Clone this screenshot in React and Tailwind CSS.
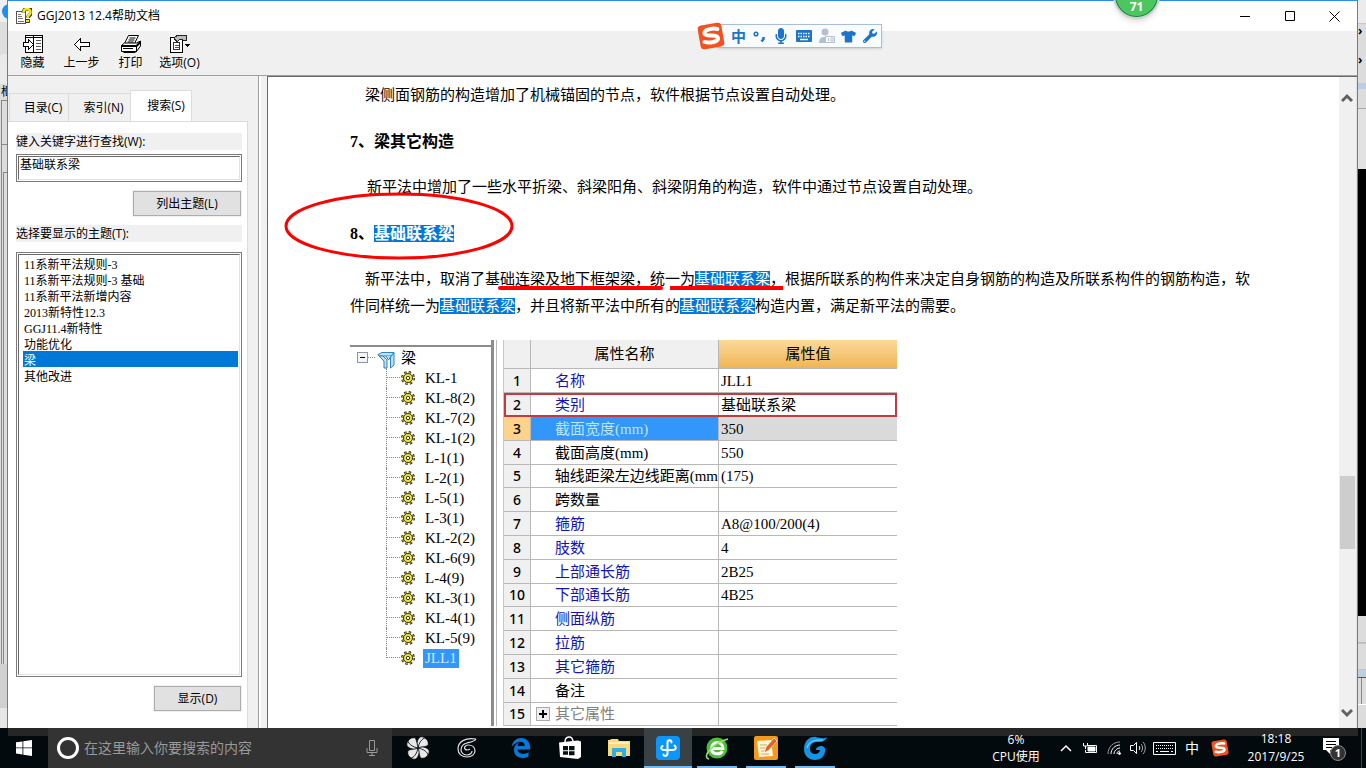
import { FaMicrophone, FaTshirt, FaWrench } from 'react-icons/fa'

const UI_FONT = "font-['Open_Sans','Noto_Sans_CJK_SC',sans-serif]"
const SONG_FONT = "font-['Liberation_Serif','Noto_Sans_CJK_SC',serif]"

const TOPICS = [
  '11系新平法规则-3',
  '11系新平法规则-3 基础',
  '11系新平法新增内容',
  '2013新特性12.3',
  'GGJ11.4新特性',
  '功能优化',
  '梁',
  '其他改进',
]

const BEAMS = [
  'KL-1', 'KL-8(2)', 'KL-7(2)', 'KL-1(2)', 'L-1(1)', 'L-2(1)', 'L-5(1)', 'L-3(1)',
  'KL-2(2)', 'KL-6(9)', 'L-4(9)', 'KL-3(1)', 'KL-4(1)', 'KL-5(9)', 'JLL1',
]

const PROPERTIES = [
  { name: '名称', value: 'JLL1', tone: 'blue' },
  { name: '类别', value: '基础联系梁', tone: 'blue', boxed: true },
  { name: '截面宽度(mm)', value: '350', selected: true },
  { name: '截面高度(mm)', value: '550' },
  { name: '轴线距梁左边线距离(mm', value: '(175)' },
  { name: '跨数量', value: '' },
  { name: '箍筋', value: 'A8@100/200(4)', tone: 'blue' },
  { name: '肢数', value: '4', tone: 'blue' },
  { name: '上部通长筋', value: '2B25', tone: 'blue' },
  { name: '下部通长筋', value: '4B25', tone: 'blue' },
  { name: '侧面纵筋', value: '', tone: 'blue' },
  { name: '拉筋', value: '', tone: 'blue' },
  { name: '其它箍筋', value: '', tone: 'blue' },
  { name: '备注', value: '' },
  { name: '其它属性', value: '', tone: 'gray', expandable: true },
]

/* ---------- icons ---------- */

function HelpDocIcon() {
  return (
    <svg width="16" height="16" viewBox="0 0 16 16">
      <path d="M.5 3.500h9v12h-9z" fill="#fff" stroke="#555" shapeRendering="crispEdges" />
      <path d="M2 6h3M2 8h4M2 10h5M2 13h6" stroke="#777" shapeRendering="crispEdges" />
      <path d="M7.500 4.500c0-5 8-5 8-.5 0 3-3.500 3-3.500 6" fill="none" stroke="#333" strokeWidth="4" />
      <path d="M7.500 4.500c0-4.500 7-4.500 7-.5 0 3-3 3-3 6" fill="none" stroke="#fce803" strokeWidth="2.500" />
      <path d="M9.500 11.500h4v3h-4z" fill="#fce803" stroke="#333" />
    </svg>
  )
}

function HideIcon() {
  return (
    <svg width="22" height="20" viewBox="0 0 22 20" shapeRendering="crispEdges" fill="none" stroke="#000">
      <path d="M3.500 1.500h17v17h-17z" fill="#fff" />
      <path d="M11.500 1.500v17M3 3.500h18" />
      <path d="M14 6.500h5M14 9.500h5M14 12.500h5M14 15.500h5" stroke="#555" />
      <path d="M1.500 8.500h5v-3l5 5-5 5v-3h-5z" fill="#fff" />
    </svg>
  )
}

function BackIcon() {
  return (
    <svg width="18" height="20" viewBox="0 0 18 20" shapeRendering="crispEdges">
      <path d="M1.500 10.500l6-6v4h9v4h-9v4z" fill="#fff" stroke="#000" />
    </svg>
  )
}

function PrintIcon() {
  return (
    <svg width="22" height="20" viewBox="0 0 22 20" stroke="#000" fill="#fff">
      <path d="M8.500 1.500h10l-4 8H4.500z" />
      <path d="M9.500 4h6M8.500 6h6M7.500 8h6" strokeWidth="1" />
      <path d="M1.500 11.500l3-2.500h12l4-2v5l-4 5.500h-15z" />
      <path d="M1.500 12h15l4-4" strokeWidth="2" fill="none" />
      <path d="M16.500 12v6M3 14.500h10M3.500 18.500h12" fill="none" />
    </svg>
  )
}

function OptionsIcon() {
  return (
    <svg width="22" height="20" viewBox="0 0 22 20" shapeRendering="crispEdges">
      <path d="M1.500 3.500h12v15h-12z" fill="#fff" stroke="#000" />
      <path d="M4.500 8.500h6v7h-6z" fill="#fff" stroke="#333" />
      <path d="M6 11h4M6 13h4" stroke="#555" />
      <path d="M5 4l4-3h8v5h-3l-3-1-3 3z" fill="#bbb" stroke="#222" />
      <path d="M16 10h5l-2.500 3z" />
    </svg>
  )
}

function SogouIcon({ className }) {
  return (
    <svg className={className} viewBox="0 0 28 28">
      <g transform="rotate(-10 14 14)">
        <rect x="2" y="2" width="24" height="24" rx="4" fill="#f4511e" />
        <path
          d="M21.500 8.200C17 6.200 8 6.400 8 10.300c0 4.500 12.500 2 12.500 6.600 0 4.200-9 4.200-14 1.800"
          fill="none"
          stroke="#fff"
          strokeWidth="4"
          strokeLinecap="round"
        />
      </g>
    </svg>
  )
}

function KeyboardIcon() {
  return (
    <svg width="16" height="12" viewBox="0 0 16 12">
      <rect width="16" height="12" rx="1" fill="#1b74c9" />
      <path d="M2 3.500h12M2 6.500h12" stroke="#fff" strokeWidth="1.500" strokeDasharray="1.500 1" />
      <path d="M4 9.500h8" stroke="#fff" strokeWidth="1.500" />
    </svg>
  )
}

function UserBadgeIcon() {
  return (
    <svg width="16" height="16" viewBox="0 0 16 16" fill="#b4bfd0">
      <circle cx="6" cy="4" r="3.500" />
      <path d="M0 15c0-4 2-6 5-6h4v6z" />
      <path d="M6.500 8.500h9v6h-9z" fill="#fff" stroke="#b4bfd0" />
      <path d="M9.500 10v3M12 10h2v3h-2z" stroke="#b4bfd0" fill="none" />
    </svg>
  )
}

function GearIcon() {
  return (
    <svg width="14" height="14" viewBox="0 0 14 14">
      <circle cx="7" cy="7" r="5.500" fill="none" stroke="#3c3a10" strokeWidth="3" strokeDasharray="2.300 2.020" />
      <circle cx="7" cy="7" r="4.500" fill="#efe53c" stroke="#3c3a10" strokeWidth="1" />
      <circle cx="7" cy="7" r="5.500" fill="none" stroke="#efe53c" strokeWidth="1" strokeDasharray="1.300 3.020" strokeDashoffset="-.5" />
      <circle cx="7" cy="7" r="1.700" fill="#fff" stroke="#3c3a10" />
    </svg>
  )
}

function BeamIcon() {
  return (
    <svg width="18" height="18" viewBox="0 0 18 18" fill="#bfe3fb" stroke="#2b83c6">
      <path d="M1 3.500l4-2h12l-3 3.500H2z" />
      <path d="M2 5l5 5v7h3V9L6 5zM13.500 6L17 2v12l-3.500 3z" />
      <path d="M9 5l2.500 4L14 5" />
    </svg>
  )
}

function WindowsIcon() {
  return (
    <svg width="16" height="16" viewBox="0 0 16 16" fill="#fff">
      <path d="M0 2.300l6.500-.9v6.100H0zM7.300 1.300L16 0v7.500H7.300zM0 8.300h6.500v6.200L0 13.600zM7.300 8.300H16V16l-8.700-1.300z" />
    </svg>
  )
}

function MicOutlineIcon() {
  return (
    <svg width="12" height="18" viewBox="0 0 12 18" fill="none" stroke="#999">
      <path d="M3.500 1.500h5v10h-5zM1 9v4.500h10V9M6 13.500v3M3 16.500h6" />
    </svg>
  )
}

function FanIcon() {
  return (
    <svg width="24" height="24" viewBox="0 0 24 24" fill="#e8e8e8" stroke="#020a0d" strokeWidth=".8">
      {[0, 90, 180, 270].map((deg) => (
        <g key={deg} transform={`rotate(${deg} 12 12)`}>
          <path d="M12 12C12 7 14 4 17 1.500c4 1 6 4 5 8C18 11 15 11.500 12 12z" />
          <path d="M12 12C10 8 11 4 14 1c2-.4 4 0 4.500.8C14.500 4 13 7.500 12 12z" />
        </g>
      ))}
    </svg>
  )
}

function SpiralIcon() {
  return (
    <svg width="22" height="22" viewBox="0 0 22 22" fill="none" stroke="#e2e2e2" strokeWidth="1.200">
      <path d="M20 2C9 0 2 5 2 12c0 5 4 8 9 8 5 0 8-3 8-6 0-4-3-6-7-6-3 0-4 3-3 4 2 2 5 0 5 0" />
      <path d="M20 2c-2 3-6 3-9 4-4 1-6 4-6 7s3 5 6 5c3 0 5-2 5-4" />
    </svg>
  )
}

function EdgeIcon() {
  return (
    <svg width="24" height="24" viewBox="0 0 24 24" fill="#0a78d8">
      <path d="M2.740 10.810C3.830-1.360 22.500-1.360 21.200 13.560H8.610c0 4.290 5.810 5.650 10.930 2.750v4.220C13.250 23.880 5 21.430 5 14.090c0-5.510 4.970-7.280 4.970-7.280S8.580 8.580 8.540 10.050h7.160c0-7.120-9.800-4.480-12.960.76z" />
    </svg>
  )
}

function StoreIcon() {
  return (
    <svg width="22" height="24" viewBox="0 0 22 24">
      <path d="M0 6.500l19-2 3 1V21l-3 2-18-2z" fill="#fff" />
      <path d="M6 6c0-6 7-7 8-1" fill="none" stroke="#fff" strokeWidth="1.500" />
      <path d="M4 10h5v4.200H4zM10 10h5.500v4.200H10zM4 15.200h5v3.600H4zM10 15.200h5.500v4H10z" fill="#061014" />
    </svg>
  )
}

function FolderIcon() {
  return (
    <svg width="22" height="20" viewBox="0 0 22 20">
      <path d="M0 2h2l1-1h7l1 2h11v15H0z" fill="#f9d978" />
      <path d="M1 4h20v2H1z" fill="#fdeeb5" />
      <path d="M4 10h14v9h-4v-5H8v5H4z" fill="#31aee8" />
    </svg>
  )
}

function BeamAppIcon() {
  return (
    <svg width="24" height="24" viewBox="0 0 24 24">
      <rect width="24" height="24" rx="4" fill="#0c96f7" />
      <path
        d="M15.500 6.500c0-3-4-3-4 0v11c0 3-4 3-4 1M6.500 10c-3 3 0 4 2 4h8c4 0 4-3 2-4.500"
        fill="none"
        stroke="#fff"
        strokeWidth="2"
        strokeLinecap="round"
      />
    </svg>
  )
}

function GreenBrowserIcon() {
  return (
    <svg width="24" height="24" viewBox="0 0 24 24">
      <circle cx="12" cy="12" r="10.500" fill="#4fbd38" />
      <path d="M6.500 12.500h11.500c0-8-11.500-8-11.500 0 0 6.500 9 6.500 11 2.500" fill="none" stroke="#fff" strokeWidth="3" />
      <path d="M4 23c-8-2 4-16 19-20" fill="none" stroke="#8be36b" strokeWidth="1.500" />
    </svg>
  )
}

function NoteIcon() {
  return (
    <svg width="24" height="24" viewBox="0 0 24 24">
      <rect width="24" height="24" rx="2" fill="#f39a1d" />
      <path d="M3 5l14-1 2 16-14 1z" fill="#fff6de" />
      <path d="M6 9h7M6 12h6M7 15h4M7 18h8" stroke="#d8a55a" />
      <path d="M10 17l2-6 8-9 3 3-8 9z" fill="#e8611a" stroke="#fff" strokeWidth=".7" />
    </svg>
  )
}

function BlueSwirlIcon() {
  return (
    <svg width="24" height="24" viewBox="0 0 24 24">
      <path
        d="M24 1c-2 5-6 5-10 5-5 0-7 3-7 7s3 5 5 5c3 0 5-2 5-4h-4c0-3 3-4 6-4 3 1 4 3 3 6-1 5-5 8-10 8-6 0-11-4-11-11C1 5 7 0 13 1c4 1 8 2 11 0z"
        fill="#1593e6"
      />
      <path d="M20 4c-9 0-14 1-16 8" fill="none" stroke="#5ec6ff" strokeWidth="1.500" />
    </svg>
  )
}

function WifiIcon() {
  return (
    <svg width="14" height="14" viewBox="0 0 14 14" fill="none" stroke="#fff">
      <path d="M1 13C1 6 6 1 13 1" stroke="#999" />
      <path d="M4 13c0-5 4-9 9-9M7 13c0-3 3-6 6-6M10 13c0-2 1-3 3-3" />
      <circle cx="12.500" cy="12.500" r="1" fill="#fff" />
    </svg>
  )
}

/* ---------- desktop edges ---------- */

function LeftEdge() {
  return (
    <div className="flex w-[7px] shrink-0 flex-col overflow-hidden bg-[#dcdcdc]">
      <div className="h-[22px] bg-[#efefef] pl-[2px] pt-1">
        <div className="h-[15px] w-4 rounded-full bg-[#1f8fe8]" />
      </div>
      <div className="h-[32px] bg-[#dedede]" />
      <div className="h-[30px] rounded-tl bg-[#eaeaea]" />
      <div className={`${UI_FONT} h-4 pl-px text-[12px] leading-4`}>框</div>
      <div className="ml-px h-[45px] border border-r-0 border-[#888]" />
      <div className="ml-px flex-1 border-l border-[#888] pl-px pt-[27px]">
        <div className="h-full border-l border-t border-[#888]" />
      </div>
      <div className="h-[44px] bg-[#d0d0d0]" />
      <div className="h-5 bg-[#e6e6e6]" />
    </div>
  )
}

function RightEdge() {
  return (
    <div className="flex w-2 shrink-0 flex-col overflow-hidden bg-[#dcdcdc] text-[12px] leading-none">
      <div className="h-[23px] bg-[#ececec]" />
      <div className="flex h-[60px] flex-col justify-between border-t border-[#c8c8c8] py-px font-bold">
        <span>›</span>
        <span className="pb-4">›</span>
      </div>
      <div className="h-[6px] bg-[#b9cde4]" />
      <div className="h-5 border-b border-[#aaa]" />
      <div className="h-[60px] bg-[#e2e2e2]" />
      <div className="flex-1 bg-black" />
      <div className="h-[27px] border-b border-[#bbb]" />
      <div className="h-[27px] border-y border-[#c4c4c4]" />
      <div className="h-2 border-b border-[#555] bg-[#c0cfe0]" />
      <div className="h-[26px] w-1 border-r border-[#888]" />
      <div className="h-6 border-t border-white" />
    </div>
  )
}

/* ---------- help window ---------- */

function TitleBar() {
  return (
    <header className="flex h-[30px] shrink-0 items-center bg-white pl-2">
      <HelpDocIcon />
      <h1 className="ml-[5px] text-[12px] leading-4">GGJ2013 12.4帮助文档</h1>
      <div className="ml-auto flex h-full">
        <button aria-label="最小化" className="flex w-[45px] items-center justify-center">
          <svg width="10" height="10" stroke="#000"><path d="M0 5.500h10" /></svg>
        </button>
        <button aria-label="最大化" className="flex w-[45px] items-center justify-center">
          <svg width="10" height="10" stroke="#000" fill="none"><path d="M.5.500h9v9h-9z" /></svg>
        </button>
        <button aria-label="关闭" className="flex w-[45px] items-center justify-center">
          <svg width="11" height="11" stroke="#000"><path d="M.5.500l10 10M10.500.500l-10 10" /></svg>
        </button>
      </div>
    </header>
  )
}

function Toolbar() {
  const items = [
    { label: '隐藏', icon: HideIcon },
    { label: '上一步', icon: BackIcon },
    { label: '打印', icon: PrintIcon },
    { label: '选项(O)', icon: OptionsIcon },
  ]
  return (
    <div className="flex h-[44px] shrink-0 bg-[#f0f0f0] pt-[3px]">
      {items.map(({ label, icon: Icon }) => (
        <button key={label} className="flex w-[49px] flex-col items-center gap-px whitespace-nowrap text-[12px] leading-4">
          <Icon />
          {label}
        </button>
      ))}
    </div>
  )
}

function PushButton({ className, children }) {
  return (
    <button className={`${className} mr-px h-[25px] self-end border border-[#adadad] bg-[#e1e1e1] text-[12px] leading-4 outline outline-[#f0f0f0]`}>
      {children}
    </button>
  )
}

function SearchPanel() {
  return (
    <aside className="flex w-[251px] shrink-0 flex-col border-r border-[#a0a0a0] bg-[#f0f0f0] pt-[14px]">
      <div role="tablist" className="flex h-[31px] items-end pl-px text-[12px] leading-4">
        <button role="tab" className="h-7 w-[60px] border border-b-0 border-[#dcdcdc] pl-2">目录(C)</button>
        <button role="tab" className="h-7 w-[61px] border-t border-[#dcdcdc] pl-2">索引(N)</button>
        <button role="tab" aria-selected="true" className="h-[31px] w-[62px] border border-b-0 border-[#dcdcdc] bg-white pl-[10px]">
          搜索(S)
        </button>
      </div>
      <div className="mr-[10px] flex min-h-0 flex-1 flex-col border-r border-t border-[#dcdcdc] bg-white pb-[17px] pl-2 pr-[5px] pt-[11px]">
        <label htmlFor="keyword" className="h-[17px] bg-[#f0f0f0] text-[12px] leading-[17px]">键入关键字进行查找(W):</label>
        <div className="mt-1 border border-[#7a7a7a] p-px">
          <input
            id="keyword"
            defaultValue="基础联系梁"
            className={`${SONG_FONT} block h-[24px] w-full border border-b-[#e3e3e3] border-l-[#696969] border-r-[#e3e3e3] border-t-[#696969] px-px pb-2 text-[12px] leading-4`}
          />
        </div>
        <PushButton className="mt-[9px] w-[108px]">列出主题(L)</PushButton>
        <label htmlFor="topics" className="mt-[9px] h-[17px] bg-[#f0f0f0] text-[12px] leading-[17px]">选择要显示的主题(T):</label>
        <div className="mt-[10px] min-h-0 flex-1 border border-[#7a7a7a] p-px">
          <select
            id="topics"
            size={8}
            defaultValue="梁"
            className={`${SONG_FONT} block h-full w-full appearance-none overflow-hidden border border-b-[#e3e3e3] border-l-[#696969] border-r-[#e3e3e3] border-t-[#696969] bg-white pl-1 pr-px text-[12px] leading-4`}
          >
            {TOPICS.map((topic) => (
              <option
                key={topic}
                value={topic}
                className="h-4 min-h-0 p-0 pl-px leading-[14px] checked:bg-[linear-gradient(#0078d7,#0078d7)] checked:[-webkit-text-fill-color:white]"
              >
                {topic}
              </option>
            ))}
          </select>
        </div>
        <PushButton className="mt-[9px] w-[87px]">显示(D)</PushButton>
      </div>
    </aside>
  )
}

function Hit() {
  return <mark className="bg-[#0078d7] text-white">基础联系梁</mark>
}

function BeamTree() {
  return (
    <div className="w-[144px] shrink-0 border-r-[3px] border-[#8c8c8c]">
      <div className="mt-[5px] border-t-2 border-[#8c8c8c] pl-[7px]">
        <div className="flex h-[21px] items-center">
          <button aria-label="折叠" className="flex h-[11px] w-[11px] items-center justify-center border border-[#8a97a8] bg-[#f4f4f4]">
            <span className="h-px w-[5px] bg-black" />
          </button>
          <span className="w-[7px] border-t border-dotted border-[#888]" />
          <span className="ml-[2px] pt-1"><BeamIcon /></span>
          <span className="ml-[6px]">梁</span>
        </div>
        <ul className="ml-[29px]">
          {BEAMS.map((beam) => (
            <li key={beam} className="group flex h-5 items-center">
              <span className="h-full w-[14px] self-start border-l border-dotted border-[#888] group-last:h-[10px]">
                <span className="block h-[10px] border-b border-dotted border-[#888]" />
              </span>
              <span className="ml-px"><GearIcon /></span>
              <span className={beam === 'JLL1' ? 'ml-2 bg-[#3296fa] px-[2px] leading-[19px] text-[#cdeaff]' : 'ml-[10px]'}>{beam}</span>
            </li>
          ))}
        </ul>
      </div>
    </div>
  )
}

function nameTone(row) {
  if (row.selected) return 'bg-[#3296fa] text-[#b9e6f8]'
  if (row.tone === 'blue') return 'text-[#1414b4]'
  if (row.tone === 'gray') return 'text-[#808080]'
  return ''
}

function PropertyTable() {
  return (
    <table className="ml-[6px] w-[394px] table-fixed border-separate border-spacing-0 border-l border-[#c8c8c8] text-left leading-[22px]">
      <colgroup>
        <col className="w-[27px]" />
        <col className="w-[188px]" />
        <col />
      </colgroup>
      <thead>
        <tr className="h-[29px] text-center">
          <th className="border-b border-r border-[#b8b8b8] bg-[#f0f0f0]" />
          <th className="border-b border-r border-[#b8b8b8] bg-[#f0f0f0] font-normal">属性名称</th>
          <th className="border-b border-[#b8b8b8] bg-linear-to-b from-[#fbd998] to-[#efb553] font-normal">属性值</th>
        </tr>
      </thead>
      <tbody>
        {PROPERTIES.map((row, i) => (
          <tr
            key={row.name}
            className={`h-6 [&:nth-child(5n)]:h-[23px] ${row.boxed ? 'relative outline-2 -outline-offset-2 outline-[#c03c40]' : ''}`}
          >
            <td
              className={`border-b border-r border-[#b8b8b8] p-0 text-center font-['Noto_Sans',sans-serif] text-[14px] font-medium ${
                row.selected ? 'bg-[#fdd28a]' : 'bg-[#f0f0f0]'
              }`}
            >
              {i + 1}
            </td>
            <td className={`overflow-hidden whitespace-nowrap border-b border-r border-[#b8b8b8] p-0 ${nameTone(row)}`}>
              <div className="flex items-center">
                <span className="flex w-6 justify-center">
                  {row.expandable && (
                    <button aria-label="展开" className="flex h-[14px] w-[14px] items-center justify-center border border-[#aaa] bg-[#eee]">
                      <svg width="8" height="8" stroke="#000" strokeWidth="2"><path d="M0 4h8M4 0v8" /></svg>
                    </button>
                  )}
                </span>
                {row.name}
              </div>
            </td>
            <td className={`border-b border-[#b8b8b8] p-0 pl-[2px] ${row.selected ? 'bg-[#dadada]' : ''}`}>{row.value}</td>
          </tr>
        ))}
      </tbody>
    </table>
  )
}

// hand-drawn red ellipse and underlines over the text
function Annotations() {
  return (
    <svg className="pointer-events-none absolute left-0 top-0" width="560" height="240" fill="none" stroke="#f00" aria-hidden="true">
      <ellipse cx="131" cy="149" rx="113" ry="32" strokeWidth="3" />
      <path d="M232 211h161" strokeWidth="4" strokeLinecap="round" />
      <path d="M402 211h113" strokeWidth="4" />
    </svg>
  )
}

function ScrollBar() {
  return (
    <div className="flex w-[18px] shrink-0 flex-col border-r border-[#e3e3e3] bg-[#f0f0f0] pb-[10px] pr-px pt-[16px]">
      <svg className="self-center" width="12" height="10" fill="none" stroke="#606060" strokeWidth="3"><path d="M1 8l5-5 5 5" /></svg>
      <div className="flex min-h-0 flex-1 flex-col">
        <div className="grow-[373]" />
        <div className="ml-px h-[73px] shrink-0 bg-[#cdcdcd]" />
        <div className="grow-[159]" />
      </div>
      <svg className="self-center" width="12" height="10" fill="none" stroke="#606060" strokeWidth="3"><path d="M1 2l5 5 5-5" /></svg>
    </div>
  )
}

function Document() {
  return (
    <main className="flex min-w-0 flex-1 border-l border-t border-[#696969] bg-white">
      <article className={`${SONG_FONT} relative min-w-0 flex-1 overflow-hidden pl-[82px] pr-[86px] pt-[5px] text-[15px] leading-[27px]`}>
        <div className="flex flex-col gap-[19px]">
          <p className="indent-[15px]">梁侧面钢筋的构造增加了机械锚固的节点，软件根据节点设置自动处理。</p>
          <h2 className="text-[16px] font-bold">7、梁其它构造</h2>
          <p className="indent-[17px]">新平法中增加了一些水平折梁、斜梁阳角、斜梁阴角的构造，软件中通过节点设置自动处理。</p>
          <h2 className="text-[16px] font-bold">8、<Hit /></h2>
          <p className="indent-[15px]">
            新平法中，取消了基础连梁及地下框架梁，统一为<Hit />，根据所联系的构件来决定自身钢筋的构造及所联系构件的钢筋构造，软件同样统一为<Hit />，并且将新平法中所有的<Hit />构造内置，满足新平法的需要。
          </p>
        </div>
        <div className="mt-5 flex items-stretch leading-5">
          <BeamTree />
          <div className="ml-[2px] w-px bg-[#b8b8b8]" />
          <PropertyTable />
        </div>
        <Annotations />
      </article>
      <ScrollBar />
    </main>
  )
}

function ImeBar() {
  return (
    <div className="absolute left-[697px] top-[21px] flex h-[30px] items-center">
      <SogouIcon className="relative z-10 h-7 w-7" />
      <div className="-ml-2 flex h-6 w-[165px] items-center justify-between border border-[#a9bdd3] bg-[#f9fcff] pl-[13px] pr-1 text-[15px] font-bold leading-5 text-[#1b74c9] shadow-sm">
        <span>中</span>
        <svg width="14" height="12" fill="none" stroke="#1b74c9" strokeWidth="1.500">
          <circle cx="3" cy="4" r="1.800" />
          <path d="M10.500 7v2l-2 2.500" strokeWidth="2.500" />
        </svg>
        <FaMicrophone className="h-4 w-4" />
        <KeyboardIcon />
        <UserBadgeIcon />
        <FaTshirt className="h-[15px] w-[15px]" />
        <FaWrench className="h-[14px] w-[14px]" />
      </div>
    </div>
  )
}

function CpuBall() {
  return (
    <div className="absolute right-[206px] top-[-28px] flex h-[47px] w-[47px] items-end justify-center rounded-full border-2 border-[#d0d0d0] bg-[#4cc75f] pb-1 text-[12px] font-bold leading-3 text-white shadow-md ring-1 ring-inset ring-[#1f7a45]">
      71
    </div>
  )
}

/* ---------- taskbar ---------- */

function TaskButton({ label, active, running, children }) {
  return (
    <button aria-label={label} className={`flex h-10 w-12 flex-col items-center ${active ? 'bg-[#3a4144]' : ''}`}>
      <span className="flex flex-1 items-center pt-[2px]">{children}</span>
      <span className={`h-[2px] ${active ? 'w-12' : 'w-10'} ${active || running ? 'bg-[#76b9ed]' : ''}`} />
    </button>
  )
}

function Taskbar() {
  return (
    <footer className="relative flex h-10 shrink-0 bg-[#020a0d] text-white">
      <div className="absolute left-2 right-2 top-0 h-2 bg-[#262626]" />
      <div className="relative flex flex-1">
        <button aria-label="开始" className="flex w-12 items-center justify-center"><WindowsIcon /></button>
        <label className="flex w-[344px] items-center bg-[#333] pl-[9px] pr-[14px]">
          <span className="h-[22px] w-[22px] shrink-0 rounded-full border-[3px] border-white" />
          <input
            aria-label="搜索"
            placeholder="在这里输入你要搜索的内容"
            className="ml-[5px] min-w-0 flex-1 bg-transparent text-[14px] leading-5 placeholder:text-[#999]"
          />
          <MicOutlineIcon />
        </label>
        <div className="ml-[2px] flex gap-px">
          <TaskButton label="Fan"><FanIcon /></TaskButton>
          <TaskButton label="Spiral"><SpiralIcon /></TaskButton>
        </div>
        <div className="ml-[6px] flex gap-px">
          <TaskButton label="Edge"><EdgeIcon /></TaskButton>
          <TaskButton label="Store"><StoreIcon /></TaskButton>
          <TaskButton label="Explorer"><FolderIcon /></TaskButton>
          <TaskButton label="GGJ" active><BeamAppIcon /></TaskButton>
          <TaskButton label="Browser" running><GreenBrowserIcon /></TaskButton>
          <TaskButton label="Notes" running><NoteIcon /></TaskButton>
          <TaskButton label="Swirl" running><BlueSwirlIcon /></TaskButton>
        </div>
        <div className="ml-auto flex items-center text-[12px] leading-4">
          <div className="mr-2 w-[60px] text-center leading-[17px]">6%<br />CPU使用</div>
          <span className="flex w-6 justify-center">
            <svg width="12" height="8" fill="none" stroke="#fff" strokeWidth="1.500"><path d="M1 7l5-5 5 5" /></svg>
          </span>
          <span className="flex w-6 justify-center">
            <svg width="16" height="12" fill="none" stroke="#fff">
              <path d="M5 3.500h9.500v7H3.500V8M1.500 1v3h4V1M3.500 4v3" />
              <path d="M6 5h7v4H6z" fill="#fff" />
            </svg>
          </span>
          <span className="flex w-6 justify-center"><WifiIcon /></span>
          <span className="flex w-6 justify-center">
            <svg width="17" height="14" fill="none" stroke="#fff">
              <path d="M.5 4.500h3l3-3v11l-3-3h-3zM9 5c1 1 1 3 0 4" />
              <path d="M11 3c2 2 2 6 0 8M13 1c3 3 3 9 0 12" stroke="#aaa" />
            </svg>
          </span>
          <span className="flex w-7 justify-center">
            <svg width="23" height="13" fill="none" stroke="#fff">
              <path d="M.5.500h22v12H.5z" />
              <path d="M3 3.500h17M3 6.500h17" strokeDasharray="1 1" />
              <path d="M3 9.500h2M7 9.500h9M18 9.500h2" />
            </svg>
          </span>
          <span className="w-7 text-center text-[14px]">中</span>
          <span className="flex w-7 justify-center"><SogouIcon className="h-[18px] w-[18px]" /></span>
          <time className="ml-2 w-[68px] text-center leading-[18px]">18:18<br />2017/9/25</time>
          <button aria-label="通知" className="flex w-12 justify-center">
            <svg width="26" height="26" viewBox="0 0 26 26">
              <path d="M2 3h16v12H9v4l-4-4H2z" fill="#fff" />
              <path d="M5 6.500h10M5 9.500h10M5 12.500h6" stroke="#000" />
              <circle cx="17" cy="18" r="7.500" fill="#333" stroke="#888" />
              <text x="17" y="22" fontSize="11" fontWeight="bold" fill="#fff" textAnchor="middle">1</text>
            </svg>
          </button>
          <span className="mr-1 h-10 w-1 border-r border-[#444]" />
        </div>
      </div>
    </footer>
  )
}

export default function App() {
  return (
    <div className={`${UI_FONT} relative flex h-screen flex-col overflow-hidden text-black`}>
      <div className="flex min-h-0 flex-1">
        <LeftEdge />
        <div className="flex min-w-0 flex-1 flex-col border-x border-t border-[#2b8cf0] bg-[#f0f0f0]">
          <TitleBar />
          <Toolbar />
          <div className="flex min-h-0 flex-1 border-t border-[#a0a0a0]">
            <SearchPanel />
            <div className="w-2 shrink-0 border-l-2 border-white bg-[#f0f0f0]" />
            <Document />
          </div>
        </div>
        <RightEdge />
      </div>
      <Taskbar />
      <ImeBar />
      <CpuBall />
    </div>
  )
}
